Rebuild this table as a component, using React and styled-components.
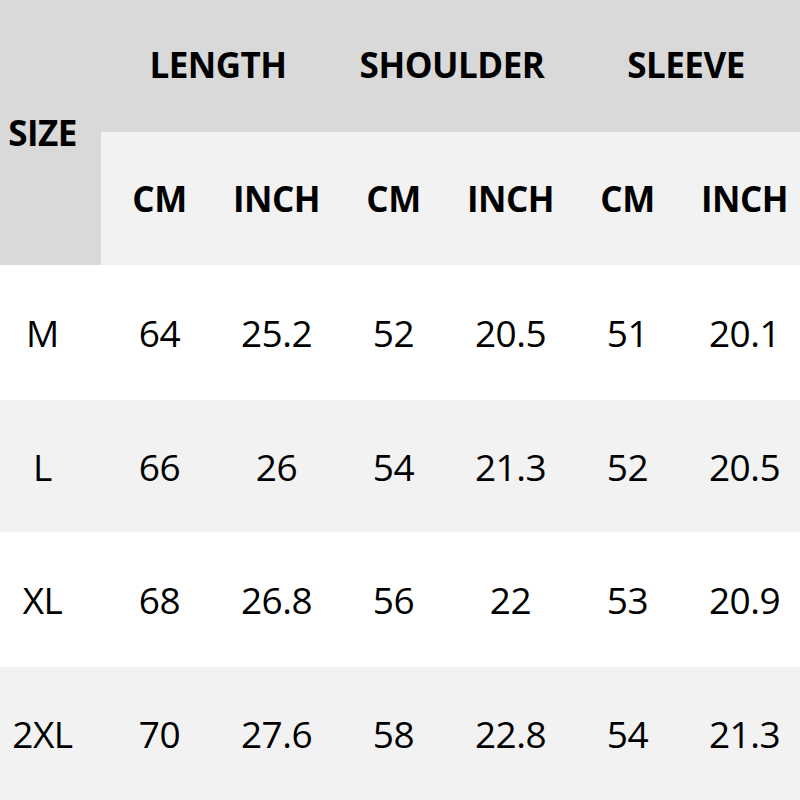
import React from "react";
import styled, { createGlobalStyle } from "styled-components";

const Global = createGlobalStyle`
  html, body { margin: 0; padding: 0; background: #ffffff; overflow: hidden; }
  body { font-family: "Open Sans", "Noto Sans", sans-serif; color: #000; }
`;

const Table = styled.div`
  width: 803px;
  height: 800px;
  display: grid;
  grid-template-columns: 101px repeat(6, 117px);
  grid-template-rows: 132px 133px 135px 132px 135px 133px;
`;

const Cell = styled.div`
  display: flex;
  align-items: center;
  justify-content: center;
  background: ${(p) => p.$bg};
  font-size: ${(p) => (p.$bold ? "35px" : "37px")};
  font-weight: ${(p) => (p.$bold ? 700 : 400)};
  letter-spacing: -0.5px;
  grid-column: ${(p) => p.$col || "auto"};
  grid-row: ${(p) => p.$row || "auto"};
  padding-right: ${(p) => (p.$first ? "16px" : "0")};
  padding-bottom: ${(p) => (p.$lift ? "3px" : "0")};
`;

const groups = ["LENGTH", "SHOULDER", "SLEEVE"];
const units = ["CM", "INCH", "CM", "INCH", "CM", "INCH"];
const rows = [
  ["M", "64", "25.2", "52", "20.5", "51", "20.1"],
  ["L", "66", "26", "54", "21.3", "52", "20.5"],
  ["XL", "68", "26.8", "56", "22", "53", "20.9"],
  ["2XL", "70", "27.6", "58", "22.8", "54", "21.3"],
];

export default function App() {
  return (
    <>
      <Global />
      <Table>
        <Cell $bg="#d9d9d9" $bold $first $row="1 / 3" $col="1">SIZE</Cell>
        {groups.map((g) => (
          <Cell key={g} $bg="#d9d9d9" $bold $lift $col="span 2">{g}</Cell>
        ))}
        {units.map((u, i) => (
          <Cell key={i} $bg="#f2f2f2" $bold>{u}</Cell>
        ))}
        {rows.map((r, ri) =>
          r.map((v, ci) => (
            <Cell
              key={ri + "-" + ci}
              $bg={ri % 2 === 0 ? "#ffffff" : "#f2f2f2"}
              $first={ci === 0}
            >
              {v}
            </Cell>
          ))
        )}
      </Table>
    </>
  );
}
